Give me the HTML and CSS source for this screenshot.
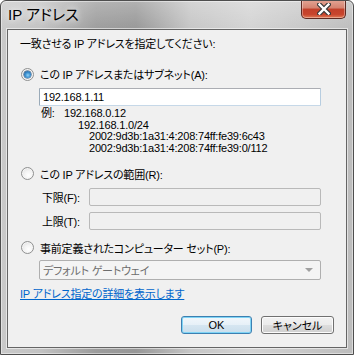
FILE: index.html
```html
<!DOCTYPE html>
<html lang="ja">
<head>
    <meta charset="UTF-8">
    <title>IP アドレス</title>
    <link rel="stylesheet" href="styles.css">
</head>
<body>
    <div class="window">
        <div class="titlebar">
            <span class="title">IP アドレス</span>
            <button class="close" type="button" aria-label="閉じる">
                <svg width="14" height="12" viewBox="0 0 14 12">
                    <path d="M2.5 1.5 L11.5 10.5 M11.5 1.5 L2.5 10.5" stroke="#3a3a3a" stroke-width="4.6" stroke-linecap="square"/>
                    <path d="M2.5 1.5 L11.5 10.5 M11.5 1.5 L2.5 10.5" stroke="#ffffff" stroke-width="2.4" stroke-linecap="square"/>
                </svg>
            </button>
        </div>
        <form class="client">
            <p class="prompt">一致させる IP アドレスを指定してください:</p>

            <label class="option option-first">
                <span class="radio checked"></span>
                <span>この IP アドレスまたはサブネット(A):</span>
            </label>
            <input class="field field-main" type="text" value="192.168.1.11">
            <div class="examples">
                <div class="example-row"><span class="example-label">例:</span>192.168.0.12</div>
                <div class="example-row indent-v4">192.168.1.0/24</div>
                <div class="example-row indent-v6">2002:9d3b:1a31:4:208:74ff:fe39:6c43</div>
                <div class="example-row indent-v6">2002:9d3b:1a31:4:208:74ff:fe39:0/112</div>
            </div>

            <label class="option option-range">
                <span class="radio"></span>
                <span>この IP アドレスの範囲(R):</span>
            </label>
            <div class="range-row range-low">
                <span class="range-label">下限(F):</span>
                <input class="field field-range" type="text" disabled>
            </div>
            <div class="range-row range-high">
                <span class="range-label">上限(T):</span>
                <input class="field field-range" type="text" disabled>
            </div>

            <label class="option option-set">
                <span class="radio"></span>
                <span>事前定義されたコンピューター セット(P):</span>
            </label>
            <div class="select">
                <span>デフォルト ゲートウェイ</span>
                <span class="select-arrow"></span>
            </div>

            <a class="details" href="#">IP アドレス指定の詳細を表示します</a>

            <div class="buttons">
                <button class="btn btn-default" type="button">OK</button>
                <button class="btn btn-cancel" type="button">キャンセル</button>
            </div>
        </form>
    </div>
</body>
</html>
```

FILE: styles.css
```css
body {
    margin: 0;
    font-family: "Liberation Sans", "Noto Sans CJK JP", sans-serif;
    font-size: 11px;
    font-feature-settings: "palt";
    letter-spacing: -0.2px;
    color: #000;
}
.window {
    width: 354px;
    height: 355px;
    box-sizing: border-box;
    border: 1px solid #4e4e4e;
    border-radius: 6px 6px 0 0;
    background:
        linear-gradient(180deg, rgba(255, 255, 255, 0.25) 0, rgba(255, 255, 255, 0) 30px),
        linear-gradient(90deg, #c9c9c9 0, #c2c2c2 40px, #9c9c9c 95px, #979797 135px, #c6c6c6 190px, #d3d3d3 250px, #bcbcbc 354px);
    box-shadow: inset 0 0 0 1px rgba(255, 255, 255, 0.45);
    display: flex;
    flex-direction: column;
    overflow: hidden;
}
.titlebar {
    height: 28px;
    display: flex;
    align-items: flex-start;
    justify-content: space-between;
    padding-left: 7px;
}
.title {
    margin-top: 5px;
    font-size: 15px;
    line-height: 18px;
    letter-spacing: 0;
    color: #000;
    text-shadow: 0 0 6px rgba(255, 255, 255, 0.9), 0 0 10px rgba(255, 255, 255, 0.7);
}
.close {
    margin-top: -1px;
    margin-right: 7px;
    width: 45px;
    height: 19px;
    padding: 0;
    border: 1px solid #5e2a22;
    border-top: none;
    border-radius: 0 0 5px 5px;
    background: linear-gradient(180deg, #e4a595 0, #d4826f 45%, #c2402a 50%, #c8452d 80%, #e07a55 100%);
    box-shadow: inset 0 0 0 1px rgba(255, 255, 255, 0.35);
    display: flex;
    align-items: center;
    justify-content: center;
}
.client {
    margin: 0 6px;
    height: 319px;
    box-sizing: border-box;
    border: 1px solid #656565;
    background-color: #f0f0f0;
    box-shadow: 0 0 0 1px rgba(255, 255, 255, 0.55);
    padding: 8px 12px 0 12px;
    display: flex;
    flex-direction: column;
    align-items: flex-start;
}
.prompt {
    margin: 0;
    line-height: 12px;
}
.option {
    height: 14px;
    display: flex;
    align-items: center;
    gap: 6px;
    margin-left: 1px;
}
.option-first {
    margin-top: 17px;
}
.option-range {
    margin-top: 12px;
}
.option-set {
    margin-top: 11px;
}
.radio {
    width: 11px;
    height: 11px;
    border: 1px solid #8f9090;
    border-radius: 50%;
    background: radial-gradient(circle at 60% 65%, #ffffff 0, #f4f4f4 40%, #d9d9d9 100%);
    box-shadow: inset 0 0 0 1px #f5f5f5;
    display: flex;
    align-items: center;
    justify-content: center;
}
.radio.checked::after {
    content: "";
    width: 7px;
    height: 7px;
    border-radius: 50%;
    background: radial-gradient(circle at 55% 60%, #8fd2f7 0, #3b8fcf 45%, #1b4f86 100%);
    box-shadow: 0 0 0 0.5px #20456e;
}
.field {
    height: 18px;
    box-sizing: border-box;
    margin: 0;
    padding: 0 3px;
    font: inherit;
    font-size: 11px;
    letter-spacing: -0.2px;
    border: 1px solid #abadb3;
    border-color: #abadb3 #b7cde0 #c6d8e8 #9aaab8;
    background-color: #fff;
    border-radius: 1px;
}
.field-main {
    margin-top: 7px;
    margin-left: 19px;
    width: 282px;
}
.field:disabled {
    border: 1px solid #b9b9b9;
    border-radius: 2px;
    background-color: #f0f0f0;
}
.examples {
    margin-top: 2px;
    margin-left: 21px;
    line-height: 11.67px;
}
.example-label {
    display: inline-block;
    width: 23px;
}
.indent-v4 {
    padding-left: 37px;
}
.indent-v6 {
    padding-left: 48px;
}
.range-row {
    display: flex;
    align-items: center;
    margin-left: 22px;
}
.range-low {
    margin-top: 7px;
}
.range-high {
    margin-top: 6px;
}
.range-label {
    width: 47px;
}
.field-range {
    width: 232px;
}
.select {
    margin-top: 5px;
    margin-left: 19px;
    width: 282px;
    height: 20px;
    box-sizing: border-box;
    border: 1px solid #afafaf;
    border-radius: 2px;
    background-color: #f4f4f4;
    color: #6d6d6d;
    padding: 0 3px;
    display: flex;
    align-items: center;
    justify-content: space-between;
}
.select-arrow {
    width: 0;
    height: 0;
    margin-right: 4px;
    border-left: 4px solid transparent;
    border-right: 4px solid transparent;
    border-top: 4px solid #a0a0a0;
}
.details {
    margin-top: 8px;
    line-height: 12px;
    color: #0066cc;
}
.buttons {
    margin-top: 16px;
    align-self: flex-end;
    display: flex;
    gap: 9px;
}
.btn {
    height: 18px;
    padding: 0;
    font: inherit;
    font-size: 11px;
    color: #000;
    border: 1px solid #707070;
    border-radius: 3px;
    background: linear-gradient(180deg, #f2f2f2 0, #ebebeb 50%, #dddddd 50%, #cfcfcf 100%);
    box-shadow: inset 0 0 0 1px #fcfcfc;
}
.btn-default {
    width: 71px;
    border-color: #3c7fb1;
    box-shadow: inset 0 0 0 1px #7fd4f5;
    background: linear-gradient(180deg, #f1f7fb 0, #e6f0f7 50%, #d6e6f1 50%, #cadeec 100%);
}
.btn-cancel {
    width: 73px;
}
```
